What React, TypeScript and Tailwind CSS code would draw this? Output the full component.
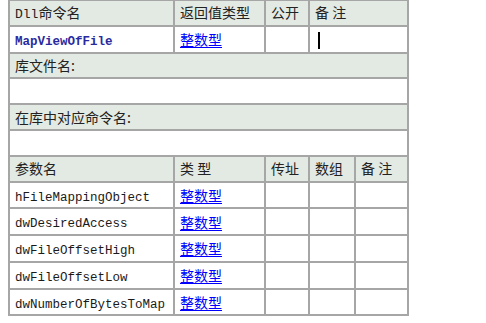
const cjk = "font-['Noto_Sans_CJK_SC','Noto_Sans',sans-serif]";
const mono = "font-['Liberation_Mono','Noto_Sans_CJK_SC',monospace]";

const cell = "border-2 border-[#a6a6a6] h-[25.8px] px-[5px] py-0 align-middle text-left";
const head = `${cell} bg-[#e3eae3] text-[14px] font-normal text-[#222] ${cjk}`;
const body = `${cell} bg-white`;

const Link = () => (
  <a href="#" className={`text-[14px] text-[#0000ff] underline underline-offset-2 ${cjk}`}>
    整数型
  </a>
);

const params = [
  "hFileMappingObject",
  "dwDesiredAccess",
  "dwFileOffsetHigh",
  "dwFileOffsetLow",
  "dwNumberOfBytesToMap",
];

export default function App() {
  return (
    <div className="w-[486px] h-[323px] bg-white overflow-hidden">
      <table className="ml-[8px] -mt-px w-[399px] table-fixed border-collapse">
        <colgroup>
          <col className="w-[165px]" />
          <col className="w-[91px]" />
          <col className="w-[44px]" />
          <col className="w-[46px]" />
          <col className="w-[53px]" />
        </colgroup>
        <tbody>
          <tr>
            <th className={head}>
              <span className={`${mono} text-[13px]`}>Dll</span>命令名
            </th>
            <th className={head}>返回值类型</th>
            <th className={head}>公开</th>
            <th className={head} colSpan={2}>备 注</th>
          </tr>
          <tr>
            <td className={body}>
              <span className={`${mono} text-[12.5px] font-bold text-[#2a2aa0]`}>MapViewOfFile</span>
            </td>
            <td className={body}>
              <Link />
            </td>
            <td className={body}></td>
            <td className={body} colSpan={2}>
              <span className="inline-block w-[2px] h-[17px] bg-black align-middle ml-[3px]" />
            </td>
          </tr>
          <tr>
            <th className={head} colSpan={5}>库文件名:</th>
          </tr>
          <tr>
            <td className={body} colSpan={5}></td>
          </tr>
          <tr>
            <th className={head} colSpan={5}>在库中对应命令名:</th>
          </tr>
          <tr>
            <td className={body} colSpan={5}></td>
          </tr>
          <tr>
            <th className={head}>参数名</th>
            <th className={head}>类 型</th>
            <th className={head}>传址</th>
            <th className={head}>数组</th>
            <th className={head}>备 注</th>
          </tr>
          {params.map((p) => (
            <tr key={p}>
              <td className={body}>
                <span className={`${mono} text-[12.5px] text-[#1a1a1a]`}>{p}</span>
              </td>
              <td className={body}>
                <Link />
              </td>
              <td className={body}></td>
              <td className={body}></td>
              <td className={body}></td>
            </tr>
          ))}
        </tbody>
      </table>
    </div>
  );
}
